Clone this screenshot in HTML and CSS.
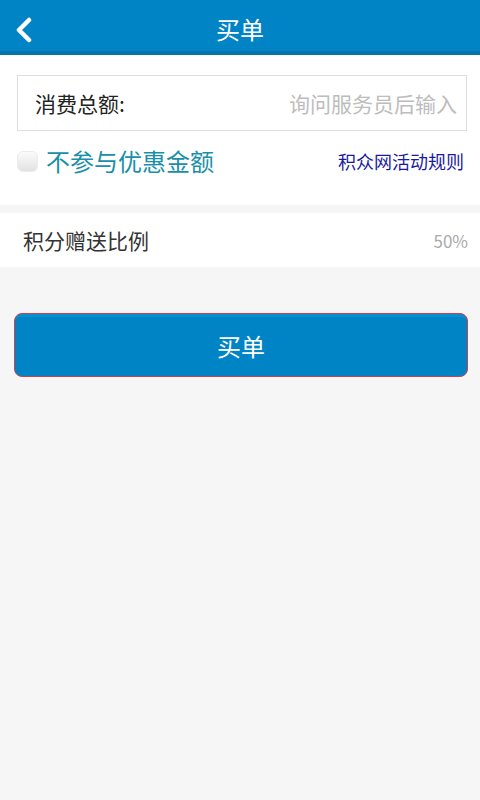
FILE: index.html
```html
<!DOCTYPE html>
<html lang="zh-CN">
<head>
  <meta charset="UTF-8" />
  <meta name="viewport" content="width=device-width, initial-scale=1.0"/>
  <title>买单</title>
  <link rel="stylesheet" href="styles.css">
</head>
<body>
  <header class="topbar">
    <a class="back" href="#">
      <svg width="20" height="26" viewBox="0 0 20 26">
        <path d="M15 3 L5 13 L15 23" fill="none" stroke="#fff" stroke-width="4.5" stroke-linecap="round" stroke-linejoin="round"/>
      </svg>
    </a>
    <h1>买单</h1>
  </header>

  <section class="panel">
    <div class="amount">
      <span class="amount-label">消费总额:</span>
      <span class="amount-hint">询问服务员后输入</span>
    </div>
    <div class="options">
      <label class="check">
        <span class="box"></span>
        <span class="check-text">不参与优惠金额</span>
      </label>
      <a class="rules" href="#">积众网活动规则</a>
    </div>
  </section>

  <section class="ratio">
    <span class="ratio-label">积分赠送比例</span>
    <span class="ratio-value">50%</span>
  </section>

  <div class="actions">
    <button class="pay">买单</button>
  </div>
</body>
</html>
```

FILE: styles.css
```css
:root {
  --blue: #0184c6;
  --blue-dark: #0572aa;
  --bg: #f6f6f6;
}

body {
  margin: 0;
  font-family: "Noto Sans CJK SC", "Noto Sans", sans-serif;
  background: var(--bg);
  color: #222;
}

.topbar {
  position: relative;
  height: 51px;
  background: var(--blue);
  border-bottom: 4px solid var(--blue-dark);
  display: flex;
  align-items: center;
  justify-content: center;
}

.topbar h1 {
  margin: 0;
  font-size: 24px;
  font-weight: normal;
  color: #fff;
  line-height: 1;
  padding-top: 7px;
}

.back {
  position: absolute;
  left: 14px;
  top: 17px;
  display: block;
  line-height: 0;
}

.panel {
  background: #fff;
  padding: 20px 13px 0 17px;
  height: 150px;
  box-sizing: border-box;
}

.amount {
  height: 56px;
  border: 1px solid #dedede;
  box-sizing: border-box;
  display: flex;
  align-items: center;
  justify-content: space-between;
  padding: 0 9px 0 17px;
}

.amount-label {
  font-size: 21px;
  color: #222;
}

.amount-hint {
  font-size: 21px;
  color: #bdbdbd;
}

.options {
  display: flex;
  align-items: center;
  justify-content: space-between;
  height: 30px;
  margin-top: 15px;
  padding-right: 3px;
}

.check {
  display: flex;
  align-items: center;
}

.box {
  width: 21px;
  height: 21px;
  border-radius: 6px;
  background: linear-gradient(to bottom, #fbfbfb, #e2e2e2);
  border: 1px solid #ececec;
  box-sizing: border-box;
  margin-right: 8px;
}

.check-text {
  font-size: 24px;
  line-height: 30px;
  color: #1a8fa8;
}

.rules {
  font-size: 18px;
  line-height: 30px;
  color: #1a1a9e;
  text-decoration: none;
}

.ratio {
  margin-top: 8px;
  height: 54px;
  background: #fff;
  display: flex;
  align-items: center;
  justify-content: space-between;
  padding: 0 12px 0 23px;
}

.ratio-label {
  font-size: 21px;
  color: #333;
}

.ratio-value {
  font-size: 17px;
  color: #aaa;
}

.actions {
  padding: 46px 12px 0 14px;
}

.pay {
  display: block;
  width: 100%;
  height: 64px;
  background: var(--blue);
  border: 1px solid #d0404a;
  border-radius: 8px;
  color: #fff;
  font-family: inherit;
  font-size: 24px;
  box-shadow: inset 0 9px 0 -6px #0a8ed0;
}
```
